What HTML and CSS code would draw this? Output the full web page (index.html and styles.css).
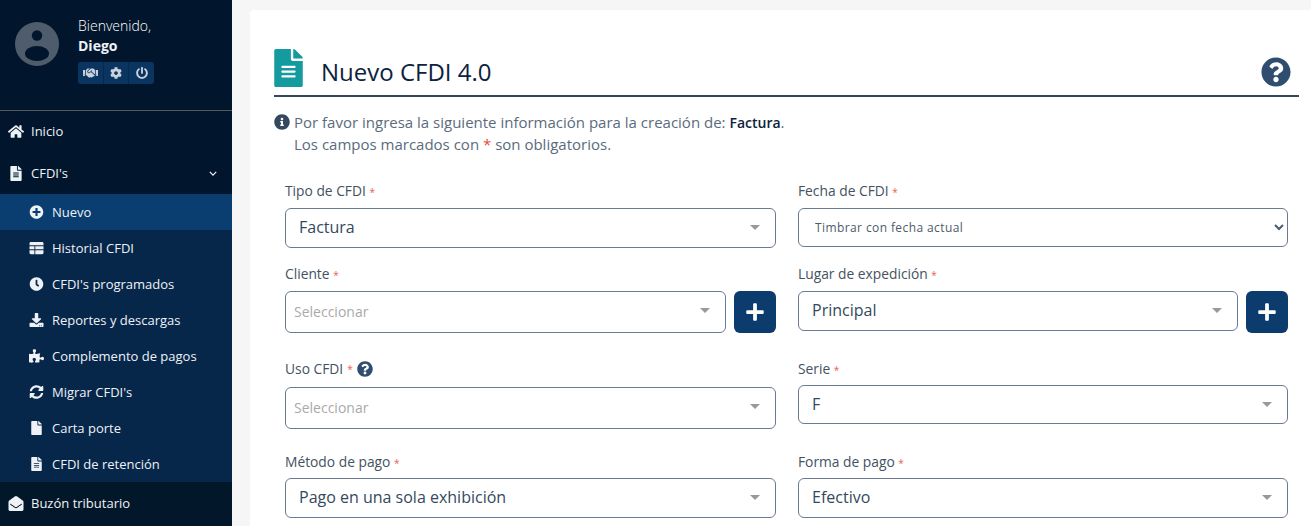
FILE: index.html
```html
<!DOCTYPE html>
<html lang="es">

<head>
    <meta charset="utf-8">
    <title>Nuevo CFDI 4.0</title>
    <link rel="stylesheet" href="styles.css">
</head>

<body>
    <svg class="icon-defs">
        <symbol id="i-home" viewBox="0 0 576 512"><path d="M280.37 148.26L96 300.11V464a16 16 0 0 0 16 16l112.06-.29a16 16 0 0 0 15.92-16V368a16 16 0 0 1 16-16h64a16 16 0 0 1 16 16v95.64a16 16 0 0 0 16 16.05L464 480a16 16 0 0 0 16-16V300L295.67 148.26a12.19 12.19 0 0 0-15.3 0zM571.6 251.47L488 182.56V44.05a12 12 0 0 0-12-12h-56a12 12 0 0 0-12 12v72.61L318.47 43a48 48 0 0 0-61 0L4.34 251.47a12 12 0 0 0-1.6 16.9l25.5 31A12 12 0 0 0 45.15 301l235.22-193.74a12.19 12.19 0 0 1 15.3 0L530.9 301a12 12 0 0 0 16.9-1.6l25.5-31a12 12 0 0 0-1.7-16.93z"/></symbol>
        <symbol id="i-file-alt" viewBox="0 0 384 512"><path d="M224 136V0H24C10.7 0 0 10.7 0 24v464c0 13.3 10.7 24 24 24h336c13.3 0 24-10.7 24-24V160H248c-13.2 0-24-10.8-24-24zm64 236c0 6.6-5.4 12-12 12H108c-6.6 0-12-5.4-12-12v-8c0-6.6 5.4-12 12-12h168c6.6 0 12 5.4 12 12v8zm0-64c0 6.6-5.4 12-12 12H108c-6.6 0-12-5.4-12-12v-8c0-6.6 5.4-12 12-12h168c6.6 0 12 5.4 12 12v8zm0-72v8c0 6.6-5.4 12-12 12H108c-6.6 0-12-5.4-12-12v-8c0-6.6 5.4-12 12-12h168c6.6 0 12 5.4 12 12zm96-114.1v6.1H256V0h6.1c6.4 0 12.5 2.5 17 7l97.9 98c4.5 4.5 7 10.6 7 16.9z"/></symbol>
        <symbol id="i-file" viewBox="0 0 384 512"><path d="M224 136V0H24C10.7 0 0 10.7 0 24v464c0 13.3 10.7 24 24 24h336c13.3 0 24-10.7 24-24V160H248c-13.2 0-24-10.8-24-24zm160-14.1v6.1H256V0h6.1c6.4 0 12.5 2.5 17 7l97.9 98c4.5 4.5 7 10.6 7 16.9z"/></symbol>
        <symbol id="i-plus-circle" viewBox="0 0 512 512"><path d="M256 8C119 8 8 119 8 256s111 248 248 248 248-111 248-248S393 8 256 8zm144 276c0 6.6-5.4 12-12 12h-92v92c0 6.6-5.4 12-12 12h-56c-6.6 0-12-5.4-12-12v-92h-92c-6.6 0-12-5.4-12-12v-56c0-6.6 5.4-12 12-12h92v-92c0-6.6 5.4-12 12-12h56c6.6 0 12 5.4 12 12v92h92c6.6 0 12 5.4 12 12v56z"/></symbol>
        <symbol id="i-table" viewBox="0 0 512 512"><path d="M48 32h416c26.5 0 48 21.5 48 48v76H0V80c0-26.5 21.500-48 48-48zM0 192h180v112H0zM212 192h300v112H212zM0 340h180v140H48c-26.5 0-48-21.500-48-48zM212 340h300v92c0 26.500-21.500 48-48 48H212z"/></symbol>
        <symbol id="i-clock" viewBox="0 0 512 512"><path d="M256,8C119,8,8,119,8,256S119,504,256,504,504,393,504,256,393,8,256,8Zm92.49,313h0l-20,25a16,16,0,0,1-22.49,2.5h0l-67-49.72a40,40,0,0,1-15-31.23V112a16,16,0,0,1,16-16h32a16,16,0,0,1,16,16V256l58,42.5A16,16,0,0,1,348.49,321Z"/></symbol>
        <symbol id="i-download" viewBox="0 0 512 512"><path d="M216 0h80c13.3 0 24 10.7 24 24v168h87.7c17.8 0 26.7 21.5 14.1 34.1L269.7 378.3c-7.5 7.5-19.8 7.5-27.3 0L90.1 226.1c-12.6-12.6-3.7-34.1 14.1-34.1H192V24c0-13.3 10.7-24 24-24zm296 376v112c0 13.3-10.7 24-24 24H24c-13.3 0-24-10.7-24-24V376c0-13.3 10.7-24 24-24h146.7l49 49c20.1 20.1 52.5 20.1 72.6 0l49-49H488c13.3 0 24 10.7 24 24zm-124 88c0-11-9-20-20-20s-20 9-20 20 9 20 20 20 20-9 20-20zm64 0c0-11-9-20-20-20s-20 9-20 20 9 20 20 20 20-9 20-20z"/></symbol>
        <symbol id="i-puzzle" viewBox="0 0 576 512"><path d="M519.442 288.651c-41.519 0-59.5 31.593-82.058 31.593C377.409 320.244 432 144 432 144s-196.288 80-196.288-3.297c0-35.827 36.288-46.25 36.288-85.985C272 19.216 243.885 0 210.539 0c-34.654 0-66.366 18.891-66.366 56.346 0 41.364 31.711 59.277 31.711 81.75C175.885 207.719 0 166.758 0 166.758v333.237s178.635 41.047 178.635-28.662c0-22.473-40-40.107-40-81.471 0-37.456 29.25-56.346 63.577-56.346 33.673 0 61.788 19.216 61.788 54.717 0 39.735-36.288 50.158-36.288 85.985 0 60.803 129.675 25.73 181.23 25.73 0 0-34.725-120.101 25.827-120.101 35.962 0 46.423 36.152 86.308 36.152C556.712 416 576 387.99 576 354.443c0-34.199-18.962-65.792-56.558-65.792z"/></symbol>
        <symbol id="i-sync" viewBox="0 0 512 512"><path d="M370.72 133.28C339.458 104.008 298.888 87.962 255.848 88c-77.458.068-144.328 53.178-162.791 126.85-1.344 5.363-6.122 9.15-11.651 9.15H24.103c-7.498 0-13.194-6.807-11.807-14.176C33.933 94.924 134.813 8 256 8c66.448 0 126.791 26.136 171.315 68.685L463.03 40.97C478.149 25.851 504 36.559 504 57.941V192c0 13.255-10.745 24-24 24H345.941c-21.382 0-32.09-25.851-16.971-40.971l41.75-41.749zM32 296h134.059c21.382 0 32.09 25.851 16.971 40.971l-41.75 41.75c31.262 29.273 71.835 45.319 114.876 45.28 77.418-.07 144.315-53.144 162.787-126.849 1.344-5.363 6.122-9.15 11.651-9.15h57.304c7.498 0 13.194 6.807 11.807 14.176C478.067 417.076 377.187 504 256 504c-66.448 0-126.791-26.136-171.315-68.685L48.97 471.03C33.851 486.149 8 475.441 8 454.059V320c0-13.255 10.745-24 24-24z"/></symbol>
        <symbol id="i-envelope-open" viewBox="0 0 512 512"><path d="M512 464c0 26.51-21.49 48-48 48H48c-26.51 0-48-21.49-48-48V200.724a48 48 0 0 1 18.387-37.776c24.913-19.529 45.501-35.365 164.2-121.511C199.412 29.17 232.797-.347 256 .003c23.198-.354 56.596 29.172 73.413 41.433 118.687 86.137 139.303 101.995 164.2 121.512A48 48 0 0 1 512 200.724V464zm-65.666-196.605c-2.563-3.728-7.7-4.595-11.339-1.907-22.845 16.873-55.462 40.705-105.582 77.079-16.825 12.266-50.21 41.781-73.413 41.43-23.211.344-56.559-29.143-73.413-41.43-50.114-36.37-82.734-60.204-105.582-77.079-3.639-2.688-8.776-1.821-11.339 1.907l-9.072 13.196a7.998 7.998 0 0 0 1.839 10.967c22.887 16.899 55.454 40.69 105.303 76.868 20.274 14.781 56.524 47.813 92.264 47.573 35.724.242 71.961-32.771 92.263-47.573 49.85-36.179 82.418-59.97 105.303-76.868a7.998 7.998 0 0 0 1.839-10.967l-9.071-13.196z"/></symbol>
        <symbol id="i-handshake" viewBox="0 0 640 512"><path d="M434.7 64h-85.9c-8 0-15.7 3-21.6 8.4l-98.3 90c-.1.1-.2.3-.3.4-16.6 15.6-16.3 40.5-2.1 56 12.7 13.9 39.4 17.6 56.1 2.7.1-.1.3-.1.4-.2l79.9-73.2c6.5-5.9 16.7-5.5 22.6 1 6 6.5 5.5 16.6-1 22.6l-26.1 23.9L504 313.8c2.9 2.4 5.5 5 7.9 7.7V128l-54.6-54.6c-5.9-6-14.1-9.4-22.6-9.4zM544 128.2v223.9c0 17.7 14.3 32 32 32h64V128.2h-96zm48 223.9c-8.8 0-16-7.2-16-16s7.2-16 16-16 16 7.2 16 16-7.2 16-16 16zM0 384h64c17.7 0 32-14.3 32-32V128.2H0V384zm48-63.9c8.8 0 16 7.2 16 16s-7.2 16-16 16-16-7.2-16-16c0-8.9 7.2-16 16-16zm435.9 18.6L334.6 217.5l-30 27.5c-29.7 27.1-75.2 24.5-101.7-4.4-26.9-29.4-24.8-74.9 4.4-101.7L289.1 64h-83.8c-8.5 0-16.6 3.4-22.6 9.4L128 128v223.9h18.3l90.5 81.9c27.4 22.3 67.7 18.1 90-9.3l.2-.2 17.9 15.5c15.9 13 39.4 10.5 52.3-5.4l31.4-38.6 5.4 4.4c13.7 11.1 33.9 9.1 45-4.7l9.5-11.7c11.2-13.8 9.1-33.9-4.6-45z"/></symbol>
        <symbol id="i-cog" viewBox="0 0 512 512"><path d="M487.4 315.7l-42.6-24.6c4.3-23.2 4.3-47 0-70.2l42.6-24.6c4.9-2.8 7.1-8.6 5.5-14-11.1-35.6-30-67.8-54.7-94.6-3.8-4.1-10-5.1-14.8-2.3L380.8 110c-17.9-15.4-38.5-27.3-60.8-35.1V25.8c0-5.6-3.9-10.5-9.4-11.7-36.7-8.2-74.3-7.8-109.2 0-5.5 1.2-9.4 6.1-9.4 11.7V75c-22.2 7.9-42.8 19.8-60.8 35.1L88.7 85.5c-4.9-2.8-11-1.9-14.8 2.3-24.7 26.7-43.6 58.9-54.7 94.6-1.7 5.4.6 11.2 5.5 14L67.3 221c-4.3 23.2-4.3 47 0 70.2l-42.6 24.6c-4.9 2.8-7.1 8.6-5.5 14 11.1 35.6 30 67.8 54.7 94.6 3.8 4.1 10 5.1 14.8 2.3l42.6-24.6c17.9 15.4 38.5 27.3 60.8 35.1v49.2c0 5.6 3.9 10.5 9.4 11.7 36.7 8.2 74.3 7.8 109.2 0 5.5-1.2 9.4-6.1 9.4-11.7v-49.2c22.2-7.9 42.8-19.8 60.8-35.1l42.6 24.6c4.9 2.8 11 1.9 14.8-2.3 24.7-26.7 43.6-58.9 54.7-94.6 1.5-5.5-.7-11.3-5.6-14.1zM256 336c-44.1 0-80-35.9-80-80s35.9-80 80-80 80 35.9 80 80-35.9 80-80 80z"/></symbol>
        <symbol id="i-power" viewBox="0 0 512 512"><path d="M400 54.1c63 45 104 118.6 104 201.9 0 136.8-110.8 247.7-247.5 248C120 504.3 8.2 393 8 256.4 7.9 173.1 48.9 99.3 111.8 54.2c11.7-8.3 28-4.8 35 7.7L162.6 90c5.9 10.5 3.1 23.8-6.6 31-41.5 30.8-68 79.6-68 134.9-.1 92.3 74.5 168.1 168 168.1 91.6 0 168.6-74.2 168-169.1-.3-51.8-24.7-101.8-68.1-134-9.7-7.2-12.4-20.5-6.5-30.9l15.8-28.1c7-12.4 23.2-16.1 34.8-7.8zM296 264V24c0-13.3-10.7-24-24-24h-32c-13.3 0-24 10.7-24 24v240c0 13.3 10.7 24 24 24h32c13.3 0 24-10.7 24-24z"/></symbol>
        <symbol id="i-question" viewBox="0 0 512 512"><path d="M504 256c0 136.997-111.043 248-248 248S8 392.997 8 256C8 119.083 119.043 8 256 8s248 111.083 248 248zM262.655 90c-54.497 0-89.255 22.957-116.549 63.758-3.536 5.286-2.353 12.415 2.715 16.258l34.699 26.31c5.205 3.947 12.621 3.008 16.665-2.122 17.864-22.658 30.113-35.797 57.303-35.797 20.429 0 45.698 13.148 45.698 32.958 0 14.976-12.363 22.667-32.534 33.976C247.128 238.528 216 254.941 216 296v4c0 6.627 5.373 12 12 12h56c6.627 0 12-5.373 12-12v-1.333c0-28.462 83.186-29.647 83.186-106.667 0-58.002-60.165-102-116.531-102zM256 338c-25.365 0-46 20.635-46 46 0 25.364 20.635 46 46 46s46-20.636 46-46c0-25.365-20.635-46-46-46z"/></symbol>
        <symbol id="i-info" viewBox="0 0 512 512"><path d="M256 8C119.043 8 8 119.083 8 256c0 136.997 111.043 248 248 248s248-111.003 248-248C504 119.083 392.957 8 256 8zm0 110c23.196 0 42 18.804 42 42s-18.804 42-42 42-42-18.804-42-42 18.804-42 42-42zm56 254c0 6.627-5.373 12-12 12h-88c-6.627 0-12-5.373-12-12v-24c0-6.627 5.373-12 12-12h12v-64h-12c-6.627 0-12-5.373-12-12v-24c0-6.627 5.373-12 12-12h64c6.627 0 12 5.373 12 12v100h12c6.627 0 12 5.373 12 12v24z"/></symbol>
        <symbol id="i-plus" viewBox="0 0 448 512"><path d="M416 208H272V64c0-17.67-14.33-32-32-32h-32c-17.67 0-32 14.33-32 32v144H32c-17.67 0-32 14.33-32 32v32c0 17.67 14.33 32 32 32h144v144c0 17.67 14.33 32 32 32h32c17.67 0 32-14.33 32-32V304h144c17.67 0 32-14.33 32-32v-32c0-17.67-14.33-32-32-32z"/></symbol>
    </svg>

    <aside class="sidebar">
        <div class="profile">
            <svg class="avatar" viewBox="0 0 44 44">
                <circle cx="22" cy="22" r="22" fill="#4f5c6c"/>
                <circle cx="22" cy="13.5" r="5.2" fill="#01162d"/>
                <ellipse cx="22" cy="31.500" rx="12" ry="7.500" fill="#01162d"/>
            </svg>
            <div class="profile-info">
                <div class="welcome">Bienvenido,</div>
                <div class="username">Diego</div>
                <div class="profile-actions">
                    <span class="profile-btn"><svg class="icon-hand"><use href="#i-handshake"/></svg></span>
                    <span class="profile-btn"><svg class="icon-small"><use href="#i-cog"/></svg></span>
                    <span class="profile-btn"><svg class="icon-small"><use href="#i-power"/></svg></span>
                </div>
            </div>
        </div>

        <nav class="menu">
            <a class="menu-item"><svg class="menu-icon"><use href="#i-home"/></svg>Inicio</a>
            <a class="menu-item"><svg class="menu-icon"><use href="#i-file-alt"/></svg>CFDI's
                <svg class="menu-arrow" viewBox="0 0 10 6"><path d="M1 1l4 4 4-4" fill="none" stroke="currentColor" stroke-width="1.6"/></svg>
            </a>
            <div class="submenu">
                <a class="sub-item active"><svg class="sub-icon"><use href="#i-plus-circle"/></svg>Nuevo</a>
                <a class="sub-item"><svg class="sub-icon"><use href="#i-table"/></svg>Historial CFDI</a>
                <a class="sub-item"><svg class="sub-icon"><use href="#i-clock"/></svg>CFDI's programados</a>
                <a class="sub-item"><svg class="sub-icon"><use href="#i-download"/></svg>Reportes y descargas</a>
                <a class="sub-item"><svg class="sub-icon"><use href="#i-puzzle"/></svg>Complemento de pagos</a>
                <a class="sub-item"><svg class="sub-icon"><use href="#i-sync"/></svg>Migrar CFDI's</a>
                <a class="sub-item"><svg class="sub-icon"><use href="#i-file"/></svg>Carta porte</a>
                <a class="sub-item"><svg class="sub-icon"><use href="#i-file-alt"/></svg>CFDI de retención</a>
            </div>
            <a class="menu-item menu-last"><svg class="menu-icon"><use href="#i-envelope-open"/></svg>Buzón tributario</a>
        </nav>
    </aside>

    <main class="content">
        <section class="card">
            <header class="card-header">
                <svg class="title-icon"><use href="#i-file-alt"/></svg>
                <h1 class="title">Nuevo CFDI 4.0</h1>
                <svg class="help-icon"><use href="#i-question"/></svg>
            </header>

            <div class="intro">
                <svg class="info-icon"><use href="#i-info"/></svg>
                <p>Por favor ingresa la siguiente información para la creación de: <b>Factura</b>.<br>
                    Los campos marcados con <span class="req-big">*</span> son obligatorios.</p>
            </div>

            <form class="form">
                <div class="form-row row-a">
                    <div class="field">
                        <label>Tipo de CFDI <i>*</i></label>
                        <div class="select h40">Factura</div>
                    </div>
                    <div class="field">
                        <label>Fecha de CFDI <i>*</i></label>
                        <select class="native-select"><option>Timbrar con fecha actual</option></select>
                    </div>
                </div>
                <div class="form-row row-b">
                    <div class="field">
                        <label>Cliente <i>*</i></label>
                        <div class="input-add">
                            <div class="select h42 empty">Seleccionar</div>
                            <span class="add-btn"><svg><use href="#i-plus"/></svg></span>
                        </div>
                    </div>
                    <div class="field">
                        <label>Lugar de expedición <i>*</i></label>
                        <div class="input-add">
                            <div class="select h40">Principal</div>
                            <span class="add-btn"><svg><use href="#i-plus"/></svg></span>
                        </div>
                    </div>
                </div>
                <div class="form-row row-c">
                    <div class="field">
                        <label class="label-help">Uso CFDI <i>*</i> <svg class="label-icon"><use href="#i-question"/></svg></label>
                        <div class="select h42 empty">Seleccionar</div>
                    </div>
                    <div class="field">
                        <label>Serie <i>*</i></label>
                        <div class="select h39">F</div>
                    </div>
                </div>
                <div class="form-row">
                    <div class="field">
                        <label>Método de pago <i>*</i></label>
                        <div class="select h40">Pago en una sola exhibición</div>
                    </div>
                    <div class="field">
                        <label>Forma de pago <i>*</i></label>
                        <div class="select h40">Efectivo</div>
                    </div>
                </div>
            </form>
        </section>
    </main>
</body>

</html>
```

FILE: styles.css
```css
* {
    box-sizing: border-box;
}

html,
body {
    height: 100%;
}

body {
    margin: 0;
    display: flex;
    overflow: hidden;
    background-color: #f6f6f6;
    font-family: "Open Sans", sans-serif;
    color: #34495e;
}

svg {
    fill: currentColor;
}

.icon-defs {
    display: none;
}

/* Sidebar */
.sidebar {
    flex: 0 0 232px;
    background-color: #01162d;
    color: #eef2f6;
}

.profile {
    display: flex;
    height: 111px;
    padding: 16px 0 0 15px;
    border-bottom: 1px solid #56595a;
}

.avatar {
    flex: 0 0 44px;
    width: 44px;
    height: 44px;
    margin-top: 6px;
}

.profile-info {
    margin-left: 19px;
}

.welcome {
    font-size: 14px;
    font-weight: 300;
    line-height: 20px;
    color: #fff;
}

.username {
    font-size: 14px;
    font-weight: 700;
    line-height: 20px;
}

.profile-actions {
    display: flex;
    width: 76px;
    height: 22px;
    margin-top: 6px;
    background-color: #0a3561;
    border-radius: 3px;
}

.profile-btn {
    flex: 1;
    display: flex;
    align-items: center;
    justify-content: center;
    color: #c9d2dc;
    border-left: 1px solid #08294c;
}

.profile-btn:first-child {
    border-left: 0;
}

.icon-hand {
    width: 15px;
    height: 12px;
}

.icon-small {
    width: 12px;
    height: 12px;
}

.menu-item {
    display: flex;
    align-items: center;
    height: 42px;
    padding-left: 8px;
    font-size: 13px;
}

.menu-item:first-child {
    height: 41px;
    padding-bottom: 1px;
}

.menu-icon {
    flex: 0 0 16px;
    width: 16px;
    height: 15px;
    margin-right: 7px;
}

.menu-arrow {
    width: 8px;
    height: 5px;
    margin-left: auto;
    margin-right: 15px;
}

.menu-last {
    height: 44px;
    padding-bottom: 2px;
    background-color: #021729;
}

.submenu {
    background-color: #06264a;
}

.sub-item {
    display: flex;
    align-items: center;
    height: 36px;
    padding-left: 29px;
    font-size: 13px;
}

.sub-item.active {
    background-color: #0a3d70;
}

.sub-icon {
    flex: 0 0 15px;
    width: 15px;
    height: 14px;
    margin-right: 8px;
}

/* Content */
.content {
    flex: 1;
    min-width: 0;
    padding: 10px 0 0 18px;
}

.card {
    height: 100%;
    padding: 39px 12px 0 24px;
    background-color: #fff;
    border-radius: 4px 0 0 0;
}

.card-header {
    display: flex;
    align-items: flex-end;
    height: 48px;
    padding-bottom: 8px;
    border-bottom: 2px solid #34495e;
}

.title-icon {
    width: 29px;
    height: 38px;
    color: #149a9f;
}

.title {
    margin: 0 0 -1px 18px;
    font-size: 24px;
    font-weight: 400;
    line-height: 32px;
    color: #0c2340;
}

.help-icon {
    width: 30px;
    height: 30px;
    margin-left: auto;
    margin-right: 8px;
    color: #2f4d6f;
}

.intro {
    display: flex;
    margin-top: 14px;
    font-size: 15px;
    line-height: 22px;
    color: #5a6b7d;
}

.intro p {
    margin: 0;
}

.intro b {
    font-size: 14px;
    font-weight: 600;
    line-height: 1;
    color: #0c2340;
}

.info-icon {
    flex: 0 0 16px;
    width: 16px;
    height: 16px;
    margin: 3px 4px 0 0;
    color: #34495e;
}

.req-big {
    color: #e74c3c;
}

.form {
    margin-top: 27px;
    padding: 0 11px;
}

.form-row {
    display: grid;
    grid-template-columns: 491px 490px;
    column-gap: 22px;
}

.row-a {
    margin-bottom: 17px;
}

.row-b {
    margin-bottom: 27px;
}

.row-c {
    margin-bottom: 24px;
}

.field label {
    display: block;
    height: 18px;
    margin-bottom: 8px;
    font-size: 13.8px;
    line-height: 18px;
    color: #44525f;
}

.row-c label,
.form-row:last-child label {
    margin-bottom: 7px;
}

.row-c .label-help {
    display: flex;
    align-items: center;
    gap: 4px;
    margin-bottom: 9px;
}

.field i {
    font-style: normal;
    font-size: 10px;
    color: #e8604f;
}

.label-icon {
    width: 16px;
    height: 16px;
    color: #2f4d6f;
}

.select {
    position: relative;
    display: flex;
    align-items: center;
    padding: 0 0 2px 13px;
    font-size: 16px;
    color: #34495e;
    background-color: #fff;
    border: 1px solid #6b7a90;
    border-radius: 6px;
}

.select::after {
    content: "";
    position: absolute;
    right: 15px;
    top: 50%;
    margin-top: -3px;
    border-top: 5px solid #999;
    border-left: 5px solid transparent;
    border-right: 5px solid transparent;
}

.h39 {
    height: 39px;
}

.h40 {
    height: 40px;
}

.h42 {
    height: 42px;
}

.select.empty {
    padding-left: 8px;
    font-size: 14px;
    color: #aaa;
}

.select.empty::after {
    margin-top: -4px;
}

.native-select {
    width: 100%;
    height: 39px;
    padding-left: 12px;
    font-family: "Open Sans", sans-serif;
    font-size: 12px;
    letter-spacing: 0.4px;
    color: #4d5b6a;
    background-color: #fff;
    border: 1px solid #6b7a90;
    border-radius: 6px;
}

.input-add {
    display: flex;
    align-items: flex-start;
    gap: 8px;
}

.input-add .select {
    flex: 1;
}

.add-btn {
    flex: 0 0 42px;
    display: flex;
    align-items: center;
    justify-content: center;
    height: 42px;
    color: #fff;
    background-color: #0c3c6e;
    border-radius: 6px;
}

.add-btn svg {
    width: 18px;
    height: 20px;
}
```
